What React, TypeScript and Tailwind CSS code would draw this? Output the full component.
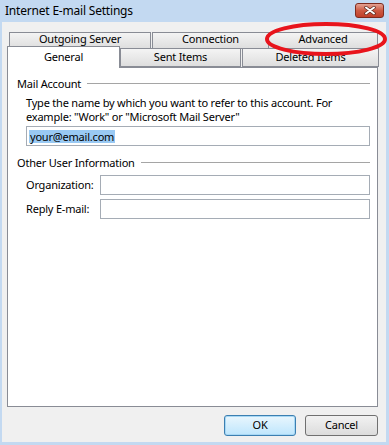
import React from "react";

const tabBase =
  "flex items-center justify-center border border-[#898c95] bg-linear-to-b from-[#f4f4f4] to-[#dedede] text-[11px] text-black";

function GroupHeader({ title }: { title: string }) {
  return (
    <div className="flex items-center gap-[6px] h-[14px]">
      <span className="text-[11px] leading-none">{title}</span>
      <div className="flex-1 h-px bg-[#a5a5a5]" />
    </div>
  );
}

function Field({ label }: { label: string }) {
  return (
    <div className="flex items-center h-[20px]">
      <span className="w-[74px] text-[11px]">{label}</span>
      <div className="flex-1 h-[20px] border border-[#a5acb5] bg-white" />
    </div>
  );
}

export default function App() {
  return (
    <div className="w-[389px] h-[445px] bg-[#c3d9f1] pl-[2px] pr-[3px] pb-[3px] flex flex-col font-['Noto_Sans'] tracking-[-0.2px] text-black relative overflow-hidden">
      {/* title bar */}
      <div className="h-[22px] flex items-center justify-between pl-[3px] pr-[2px]">
        <span className="text-[12px] leading-none">Internet E-mail Settings</span>
        <div className="w-[29px] h-[15px] rounded-[3px] border border-[#7e2b1e] bg-linear-to-b from-[#e3a293] via-[#cd5a43] to-[#c0402a] flex items-center justify-center mt-[-2px]">
          <svg width="12" height="9" viewBox="0 0 12 9">
            <path d="M2 1.5 L10 7.5 M10 1.5 L2 7.5" stroke="#5a2a20" strokeWidth="3.4" strokeLinecap="round" />
            <path d="M2 1.5 L10 7.5 M10 1.5 L2 7.5" stroke="#ffffff" strokeWidth="2" strokeLinecap="round" />
          </svg>
        </div>
      </div>

      {/* client area */}
      <div className="flex-1 bg-[#f0f0f0] flex flex-col px-[5px]">
        {/* back tab row */}
        <div className="flex mt-[10px] ml-[2px] h-[17px]">
          <div className={`${tabBase} w-[142px] pb-[2px]`}>Outgoing Server</div>
          <div className={`${tabBase} w-[117px] ml-[1px] pb-[2px]`}>Connection</div>
          <div className={`${tabBase} w-[110px] ml-[-1px] pb-[2px]`}>Advanced</div>
        </div>
        {/* front tab row */}
        <div className="flex h-[19px] mt-[-1px]">
          <div className="relative z-10 w-[113px] h-[22px] mt-[-2px] border border-b-0 border-[#898c95] bg-white flex items-start justify-center pt-[2px] text-[11px]">
            General
          </div>
          <div className={`${tabBase} w-[121px]`}>Sent Items</div>
          <div className={`${tabBase} w-[137px] ml-[1px]`}>Deleted Items</div>
        </div>

        {/* panel */}
        <div className="h-[340px] w-[371px] border border-[#898c95] bg-white flex flex-col pl-[9px] pr-[7px] pt-[8px]">
          <GroupHeader title="Mail Account" />
          <div className="pl-[9px]">
            <p className="text-[11px] leading-[13.5px] mt-[6px]">
              Type the name by which you want to refer to this account. For
              <br />
              example: "Work" or "Microsoft Mail Server"
            </p>
            <div className="mt-[3px] h-[20px] border border-[#a5acb5] bg-white flex items-center px-[2px]">
              <span className="text-[11px] leading-[13px] bg-[#99c9f3] px-px">your@email.com</span>
            </div>
          </div>
          <div className="mt-[9px]">
            <GroupHeader title="Other User Information" />
          </div>
          <div className="pl-[9px] flex flex-col gap-[4px] mt-[6px]">
            <Field label="Organization:" />
            <Field label="Reply E-mail:" />
          </div>
        </div>

        {/* buttons */}
        <div className="flex justify-end gap-[9px] mt-[8px] mr-[3px]">
          <button className="w-[72px] h-[21px] rounded-[3px] border border-[#3c7fb1] bg-linear-to-b from-[#e9f6fd] to-[#bee6fd] text-[11px] shadow-[inset_0_0_0_1px_#a7d8f5]">
            OK
          </button>
          <button className="w-[73px] h-[21px] rounded-[3px] border border-[#707070] bg-linear-to-b from-[#f2f2f2] to-[#dcdcdc] text-[11px]">
            Cancel
          </button>
        </div>
      </div>

      {/* red annotation ellipse */}
      <svg className="absolute left-[264px] top-[21px]" width="124" height="36" viewBox="0 0 124 36">
        <ellipse cx="62" cy="18" rx="59" ry="15" fill="none" stroke="#e8141c" strokeWidth="4" />
      </svg>
    </div>
  );
}
